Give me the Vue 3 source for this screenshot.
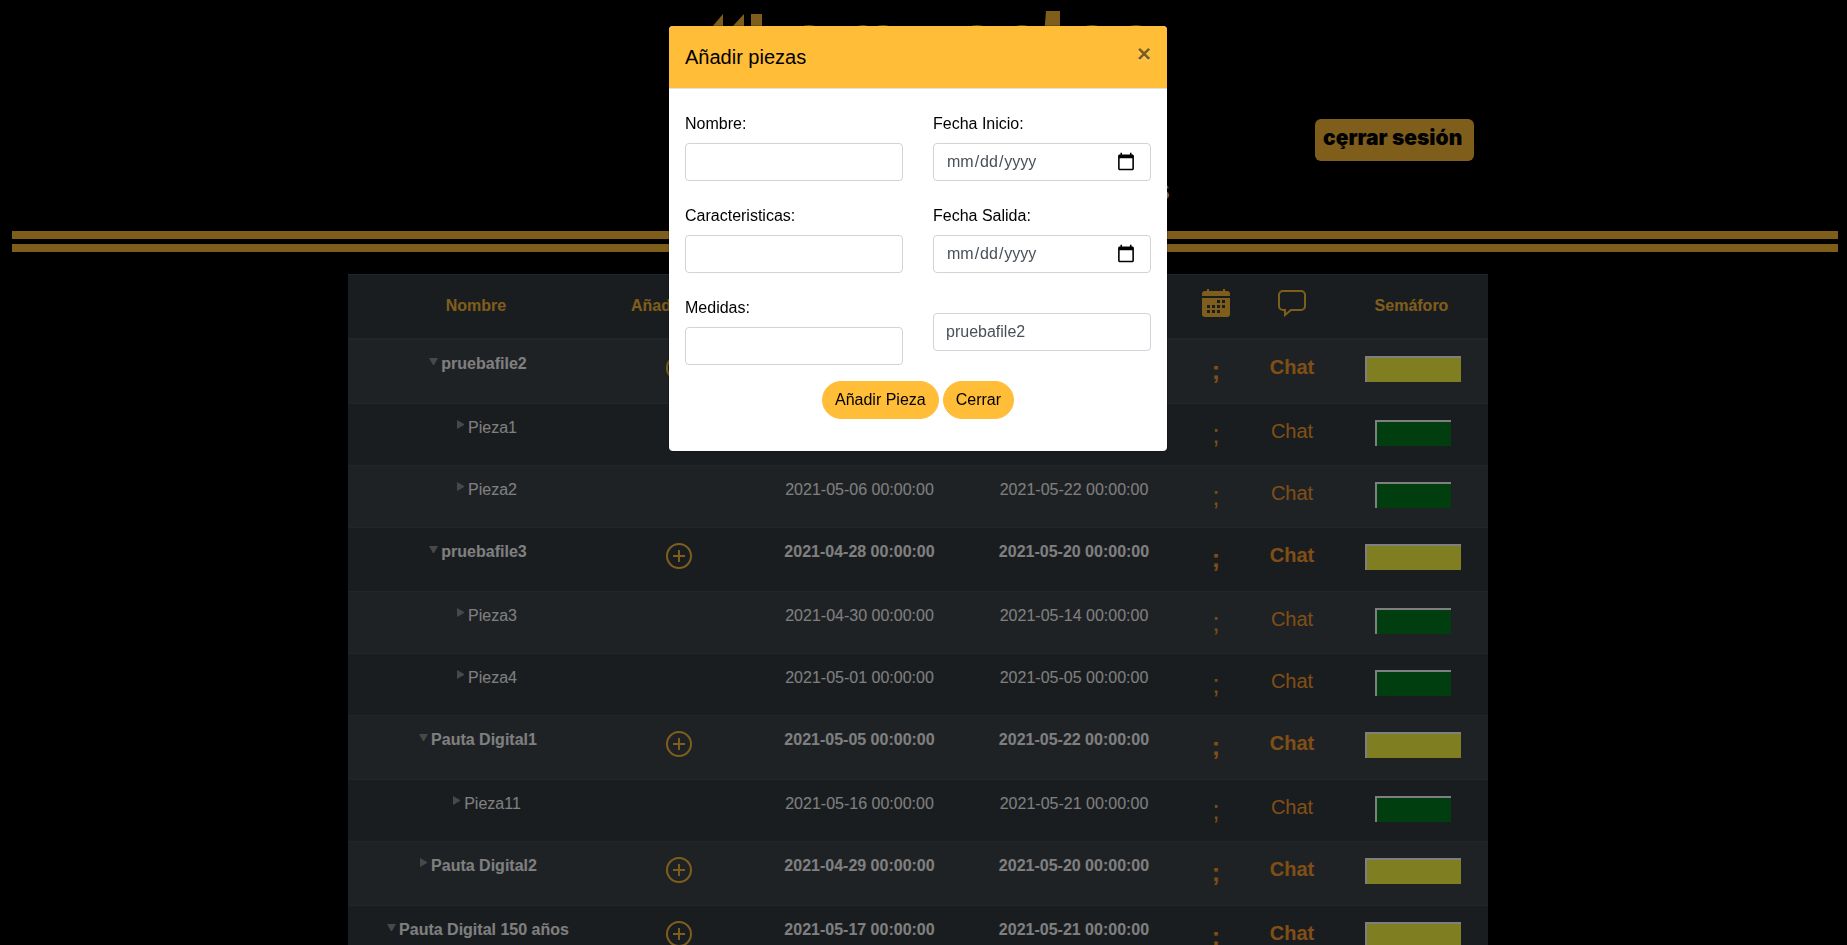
<script setup>
import { ref } from 'vue'

const form = ref({
  nombre: '',
  caracteristicas: '',
  medidas: '',
  inicio: '',
  salida: '',
  pauta: 'pruebafile2',
})

const rows = [
  { name: 'pruebafile2', parent: true, open: true, start: '2021-04-28 00:00:00', end: '2021-05-20 00:00:00' },
  { name: 'Pieza1', start: '2021-05-06 00:00:00', end: '2021-05-22 00:00:00' },
  { name: 'Pieza2', start: '2021-05-06 00:00:00', end: '2021-05-22 00:00:00' },
  { name: 'pruebafile3', parent: true, open: true, start: '2021-04-28 00:00:00', end: '2021-05-20 00:00:00' },
  { name: 'Pieza3', start: '2021-04-30 00:00:00', end: '2021-05-14 00:00:00' },
  { name: 'Pieza4', start: '2021-05-01 00:00:00', end: '2021-05-05 00:00:00' },
  { name: 'Pauta Digital1', parent: true, open: true, start: '2021-05-05 00:00:00', end: '2021-05-22 00:00:00' },
  { name: 'Pieza11', start: '2021-05-16 00:00:00', end: '2021-05-21 00:00:00' },
  { name: 'Pauta Digital2', parent: true, open: false, start: '2021-04-29 00:00:00', end: '2021-05-20 00:00:00' },
  { name: 'Pauta Digital 150 años', parent: true, open: true, start: '2021-05-17 00:00:00', end: '2021-05-21 00:00:00' },
]
</script>

<template>
  <div class="page">
    <header class="top">
      <div class="brand">
        <svg class="logo" viewBox="0 0 504 170" aria-hidden="true">
          <path d="M46 27 57 14V60H46z M66 27 78 14V60H66z M85 14H96V60H85z M380 11H394V60H376z" />
          <g>
            <ellipse cx="143" cy="33" rx="12" ry="8" />
            <ellipse cx="197" cy="33" rx="10" ry="8" />
            <ellipse cx="217" cy="33" rx="12" ry="8" />
            <ellipse cx="311" cy="33" rx="12" ry="8" />
            <ellipse cx="356" cy="33" rx="12" ry="8" />
            <ellipse cx="426" cy="33" rx="12" ry="8" />
            <ellipse cx="470" cy="33" rx="12" ry="8" />
          </g>
        </svg>
        <p class="tagline">s</p>
      </div>
      <div class="session">
        <button type="button" class="logout">cȩrrar sesión</button>
      </div>
    </header>

    <div class="rules">
      <hr />
      <hr />
    </div>

    <main class="container">
      <table class="grid">
        <colgroup>
          <col class="c-name" />
          <col class="c-add" />
          <col class="c-start" />
          <col class="c-end" />
          <col class="c-cal" />
          <col class="c-chat" />
          <col class="c-light" />
        </colgroup>
        <thead>
          <tr>
            <th scope="col">Nombre</th>
            <th scope="col">Añadir Pieza</th>
            <th scope="col">Fecha Inicio</th>
            <th scope="col">Fecha Salida</th>
            <th scope="col" aria-label="Calendario">
              <svg class="head-icon" viewBox="0 0 28 28" fill="currentColor">
                <path d="M5 0h2v2h14V0h2v2h2a3 3 0 0 1 3 3v2H0V5a3 3 0 0 1 3-3h2z" />
                <path
                  fill-rule="evenodd"
                  d="M0 9h28v16a3 3 0 0 1-3 3H3a3 3 0 0 1-3-3z M15 11v3h3v-3z M20 11v3h3v-3z M5 16v3h3v-3z M10 16v3h3v-3z M15 16v3h3v-3z M20 16v3h3v-3z M5 21v3h3v-3z M10 21v3h3v-3z M15 21v3h3v-3z"
                />
              </svg>
            </th>
            <th scope="col" aria-label="Chat">
              <svg class="head-icon" viewBox="0 0 28 28" fill="none" stroke="currentColor" stroke-width="2">
                <path d="M5 2h18a4 4 0 0 1 4 4v11a4 4 0 0 1-4 4H13l-6 5v-5H5a4 4 0 0 1-4-4V6a4 4 0 0 1 4-4z" />
              </svg>
            </th>
            <th scope="col">Semáforo</th>
          </tr>
        </thead>
        <tbody>
          <tr v-for="row in rows" :key="row.name" :class="{ parent: row.parent }">
            <td class="name">
              <button type="button" class="toggle" :aria-label="'Desplegar ' + row.name">
                <svg viewBox="0 0 12 14" fill="currentColor">
                  <path v-if="row.open" d="M0 6h9L5 13H4z" />
                  <path v-else d="M1 4l7 4v1l-7 4z" />
                </svg>
              </button>{{ row.name }}
            </td>
            <td class="add">
              <button v-if="row.parent" type="button" class="plus" aria-label="Añadir pieza">
                <svg viewBox="0 0 26 26" fill="none" stroke="currentColor" stroke-width="2">
                  <circle cx="13" cy="13" r="12" />
                  <path d="M7 13h12M13 7v12" />
                </svg>
              </button>
            </td>
            <td>{{ row.start }}</td>
            <td>{{ row.end }}</td>
            <td class="semi">;</td>
            <td class="chat"><a href="#">Chat</a></td>
            <td class="status"><div class="light"></div></td>
          </tr>
        </tbody>
      </table>
    </main>

    <div class="backdrop"></div>

    <div class="overlay">
      <section class="modal" role="dialog" aria-modal="true" aria-labelledby="modal-title">
        <div class="modal-head">
          <h5 id="modal-title">Añadir piezas</h5>
          <button type="button" class="close" aria-label="Cerrar ventana">×</button>
        </div>
        <form class="modal-body" @submit.prevent>
          <div class="columns">
            <div class="column">
              <div class="field">
                <label for="nombre">Nombre:</label>
                <input id="nombre" v-model="form.nombre" type="text" />
              </div>
              <div class="field">
                <label for="caracteristicas">Caracteristicas:</label>
                <input id="caracteristicas" v-model="form.caracteristicas" type="text" />
              </div>
              <div class="field">
                <label for="medidas">Medidas:</label>
                <input id="medidas" v-model="form.medidas" type="text" />
              </div>
            </div>
            <div class="column">
              <div class="field">
                <label for="inicio">Fecha Inicio:</label>
                <input id="inicio" v-model="form.inicio" type="date" />
              </div>
              <div class="field">
                <label for="salida">Fecha Salida:</label>
                <input id="salida" v-model="form.salida" type="date" />
              </div>
              <div class="field unlabeled">
                <input v-model="form.pauta" type="text" aria-label="Pauta" />
              </div>
            </div>
          </div>
          <div class="actions">
            <button type="submit" class="pill">Añadir Pieza</button>
            <button type="button" class="pill">Cerrar</button>
          </div>
        </form>
      </section>
    </div>
  </div>
</template>

<style>
body {
  margin: 0;
  background: #000;
  overflow: hidden;
}
</style>

<style scoped>
* {
  box-sizing: border-box;
}

.page {
  height: 100vh;
  overflow: hidden;
  background: #000;
  color: #fff;
  font: 16px/24px "Liberation Sans", Arial, sans-serif;
}

button,
input {
  font: inherit;
}

.top {
  display: grid;
  grid-template-columns: 1fr 504px 1fr;
  padding-right: 11px;
}

.brand {
  grid-column: 2;
}

.logo {
  display: block;
  width: 100%;
  fill: #ffbd38;
}

.tagline {
  margin: 0;
  text-align: right;
  font-size: 30px;
  font-weight: 700;
  line-height: 40px;
}

.session {
  padding: 119px 0 0 145px;
}

.logout {
  height: 42px;
  padding: 0 12px 4px 8px;
  border: 0;
  border-radius: 6px;
  background: #ffbd38;
  color: #000;
  font: 900 21px/24px Inter, "Liberation Sans", sans-serif;
  white-space: nowrap;
}

.rules {
  display: grid;
  gap: 5px;
  margin: 21px 9px 22px 12px;
}

.rules hr {
  width: 100%;
  height: 8px;
  margin: 0;
  border: 0;
  background: #ffbd38;
}

.container {
  padding-right: 11px;
}

.grid {
  width: 100%;
  max-width: 1140px;
  margin: 0 auto;
  border-spacing: 0;
  table-layout: fixed;
  background: #343a40;
  text-align: center;
}

.c-name { width: 256px; }
.c-add { width: 150px; }
.c-start { width: 211px; }
.c-end { width: 218px; }
.c-cal { width: 66px; }
.c-chat { width: 86px; }
.c-light { width: 153px; }

th {
  height: 66px;
  padding: 11px 12px 13px;
  border-top: 1px solid #454d55;
  border-bottom: 2px solid #454d55;
  color: #ffbd38;
  vertical-align: middle;
}

.head-icon {
  display: block;
  width: 28px;
  height: 28px;
  margin: 0 auto 6px;
}

td {
  height: 62px;
  padding: 12px 0;
  border-top: 1px solid #454d55;
  vertical-align: top;
}

.parent td {
  height: 64px;
  font-weight: 700;
}

tbody tr:first-child td {
  height: 63px;
  border-top: 0;
}

tbody tr:nth-child(odd) {
  background: #3e444a;
}

.name {
  padding-left: 21px;
}

.parent .name {
  padding-left: 4px;
}

.toggle {
  width: 12px;
  height: 24px;
  padding: 0;
  border: 0;
  background: none;
  color: #909090;
  vertical-align: top;
}

.toggle svg {
  display: block;
  width: 12px;
  height: 14px;
  margin-bottom: 10px;
}

.add {
  padding-top: 15px;
}

.plus {
  width: 26px;
  height: 26px;
  padding: 0;
  border: 0;
  background: none;
  color: #ffbd38;
}

.plus svg {
  display: block;
}

td.semi {
  font-size: 25px;
  line-height: 37px;
  color: #ff9f2a;
}

td.chat {
  font-size: 20px;
  line-height: 30px;
}

.chat a {
  color: #ff9f2a;
  text-decoration: none;
}

.status {
  padding-left: 3px;
}

.light {
  width: 76px;
  height: 26px;
  margin: 4px auto 0;
  border: solid #fff;
  border-width: 2px 0 0 2px;
  background: #007d20;
}

.parent .light {
  width: 96px;
  background: #ffff44;
}

.backdrop {
  position: fixed;
  inset: 0;
  background: #000;
  opacity: 0.5;
}

.overlay {
  position: fixed;
  inset: 0;
  display: flex;
  justify-content: center;
  align-items: flex-start;
  padding: 25px 11px 0 0;
}

.modal {
  width: 500px;
  border: 1px solid rgba(0, 0, 0, 0.2);
  border-radius: 5px;
  background: #fff;
  background-clip: padding-box;
  color: #000;
}

.modal-head {
  display: flex;
  justify-content: space-between;
  align-items: flex-start;
  padding: 16px;
  border-bottom: 1px solid #dee2e6;
  border-radius: 4px 4px 0 0;
  background: #ffbd38;
}

.modal-head h5 {
  margin: 0;
  font-size: 20px;
  font-weight: 400;
  line-height: 30px;
}

.close {
  padding: 0;
  border: 0;
  background: none;
  color: #000;
  font-size: 24px;
  font-weight: 700;
  line-height: 24px;
  text-shadow: 0 1px 0 #fff;
  opacity: 0.5;
}

.modal-body {
  padding: 23px 16px 32px;
}

.columns {
  display: grid;
  grid-template-columns: 1fr 1fr;
  gap: 30px;
}

.column {
  display: flex;
  flex-direction: column;
  gap: 23px;
}

.field label {
  display: block;
  margin-bottom: 7px;
}

.field input {
  display: block;
  width: 100%;
  height: 38px;
  padding: 6px 12px;
  border: 1px solid #ced4da;
  border-radius: 4px;
  background: #fff;
  color: #495057;
}

.field input::-webkit-calendar-picker-indicator {
  width: 20px;
  height: 20px;
}

.unlabeled {
  padding-top: 17px;
}

.actions {
  display: flex;
  justify-content: center;
  gap: 4px;
  margin-top: 16px;
}

.pill {
  height: 38px;
  padding: 6px 12px;
  border: 1px solid #ffbd38;
  border-radius: 20px;
  background: #ffbd38;
  color: #000;
}
</style>
